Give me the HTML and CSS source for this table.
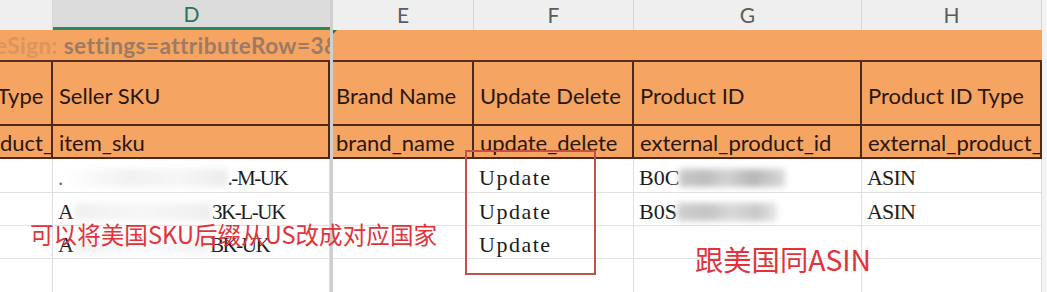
FILE: index.html
```html
<!DOCTYPE html>
<html lang="en">
<head>
<meta charset="utf-8">
<title>Sheet</title>
<link rel="stylesheet" href="styles.css">
</head>
<body>
<div class="sheet">
  <!-- column letters -->
  <div class="ch"></div>
  <div class="ch sel">D</div>
  <div class="freeze"></div>
  <div class="ch">E</div>
  <div class="ch">F</div>
  <div class="ch">G</div>
  <div class="ch">H</div>
  <div class="ch edge"></div>

  <!-- row 1 -->
  <div class="r1 sign"><span class="sign-text"><span class="faint">eSign:</span> settings=attributeRow=3&amp;</span></div>
  <div class="r1 rest"></div>
  <div class="edge r1e"></div>

  <!-- row 2 -->
  <div class="hc r2 cut"><span class="shift">Type</span></div>
  <div class="hc r2">Seller SKU</div>
  <div class="hc r2 e">Brand Name</div>
  <div class="hc r2">Update Delete</div>
  <div class="hc r2">Product ID</div>
  <div class="hc r2">Product ID Type</div>
  <div class="edge"></div>

  <!-- row 3 -->
  <div class="hc r3 cut"><span class="shift">duct_id_type</span></div>
  <div class="hc r3">item_sku</div>
  <div class="hc r3 e">brand_name</div>
  <div class="hc r3">update_delete</div>
  <div class="hc r3">external_product_id</div>
  <div class="hc r3">external_product_id_type</div>
  <div class="edge"></div>

  <!-- data 1 -->
  <div class="dc"></div>
  <div class="dc"><span class="dot">.</span><span class="blur b1"></span><span class="sku">.-M-UK</span></div>
  <div class="dc e"></div>
  <div class="dc"><span class="upd">Update</span></div>
  <div class="dc">B0C<span class="blur g1"></span></div>
  <div class="dc"><span class="asin">ASIN</span></div>
  <div class="edge"></div>

  <!-- data 2 -->
  <div class="dc"></div>
  <div class="dc">A<span class="blur b2"></span><span class="sku">3K-L-UK</span></div>
  <div class="dc e"></div>
  <div class="dc"><span class="upd">Update</span></div>
  <div class="dc">B0S<span class="blur g2"></span></div>
  <div class="dc"><span class="asin">ASIN</span></div>
  <div class="edge"></div>

  <!-- data 3 -->
  <div class="dc"></div>
  <div class="dc">A<span class="blur b3"></span><span class="sku">BK-UK</span></div>
  <div class="dc e"></div>
  <div class="dc"><span class="upd">Update</span></div>
  <div class="dc"></div>
  <div class="dc"></div>
  <div class="edge"></div>

  <!-- data 4 -->
  <div class="dc last"></div>
  <div class="dc last"></div>
  <div class="dc last e"></div>
  <div class="dc last"></div>
  <div class="dc last"></div>
  <div class="dc last"></div>
  <div class="edge"></div>

  <!-- annotations -->
  <div class="mark-box"></div>
  <div class="note note-sku">可以将美国SKU后缀从US改成对应国家</div>
  <div class="note note-asin">跟美国同ASIN</div>
</div>
</body>
</html>
```

FILE: styles.css
```css
html, body {
  margin: 0;
  padding: 0;
  background: #ffffff;
}

.sheet {
  position: relative;
  width: 1047px;
  height: 292px;
  overflow: hidden;
  display: grid;
  grid-template-columns: 53px 277px 3px 141px 160px 228px 180px 5px;
  grid-template-rows: 30px 32px 64px 33px 34px 33px 33px 33px;
  font-family: Lato, "Open Sans", sans-serif;
  color: #2a1710;
}

.sheet > div {
  box-sizing: border-box;
  min-width: 0;
}

/* column letter bar */
.ch {
  background: #efefef;
  border-right: 1px solid #d6d6d6;
  color: #5c5c5c;
  font-size: 21px;
  display: flex;
  align-items: center;
  justify-content: center;
  padding-bottom: 2px;
}
.ch.sel {
  background: #dcdcdc;
  color: #26775a;
  border-bottom: 3px solid #2a8a5e;
  border-right: none;
  padding-bottom: 0;
}
.ch.edge {
  border-right: none;
}

.freeze {
  grid-column: 3;
  grid-row: 1 / -1;
  background: #cfcfcf;
}

.edge {
  background: #f3f3f3;
}

/* row 1 */
.r1 {
  background: #f5a462;
  border-bottom: 2px solid #5a2e1e;
}
.sign {
  grid-column: 1 / 3;
  overflow: hidden;
  white-space: nowrap;
  display: flex;
  align-items: center;
  padding-top: 1px;
}
.sign-text {
  font-weight: 700;
  font-size: 22.6px;
  letter-spacing: 0.4px;
  color: #9c7b66;
  margin-left: -5px;
}
.sign .faint {
  color: #dc955d;
}
.rest {
  grid-column: 4 / 8;
  position: relative;
}
.rest::before {
  content: "";
  position: absolute;
  left: 0;
  top: 0;
  width: 0;
  height: 0;
  border-top: 4px solid #1e7a3a;
  border-right: 4px solid transparent;
}
.r1e {
  border-bottom: none;
}

/* header cells rows 2-3 */
.hc {
  background: #f5a462;
  border-right: 2px solid #4f2818;
  border-bottom: 2px solid #4f2818;
  font-size: 22px;
  display: flex;
  align-items: center;
  padding-left: 6px;
  white-space: nowrap;
  overflow: hidden;
}
.hc.r2 {
  padding-top: 4px;
}
.hc.e {
  padding-left: 3px;
}
.hc.r3 {
  padding-top: 2px;
}
.hc.cut {
  padding-left: 0;
}
.hc.cut .shift {
  margin-left: -3px;
}
.r3.cut .shift {
  margin-left: 0;
}

/* data cells */
.dc {
  border-right: 1px solid #dedede;
  border-bottom: 1px solid #e2e2e2;
  font-family: "Liberation Serif", "DejaVu Serif", serif;
  font-size: 22px;
  line-height: 22px;
  color: #1c1c1c;
  white-space: nowrap;
  display: flex;
  align-items: center;
  padding-left: 5px;
  padding-top: 5px;
}
.dc.e {
  border-right: none;
}
.dc.last {
  border-bottom: none;
}
.upd {
  letter-spacing: 1.5px;
}
.asin {
  letter-spacing: -0.8px;
}
.sku {
  letter-spacing: -1.4px;
  font-size: 21px;
}
.dot {
  color: #555555;
}

.blur {
  display: inline-block;
  height: 18px;
  filter: blur(3px);
}
.b1 {
  width: 164px;
  background: linear-gradient(90deg, #ffffff 0%, #f1f1f1 40%, #f6f6f6 70%, #ececec 100%);
}
.b2 {
  width: 138px;
  background: linear-gradient(90deg, #f0f0f0 0%, #f7f7f7 50%, #eeeeee 100%);
}
.b3 {
  width: 136px;
  background: linear-gradient(90deg, #f3f3f3 0%, #fafafa 60%, #f2f2f2 100%);
}
.g1 {
  width: 106px;
  background: linear-gradient(90deg, #c9c9c9 0%, #bdbdbd 25%, #d2d2d2 45%, #b6b6b6 70%, #dadada 100%);
}
.g2 {
  width: 100px;
  background: linear-gradient(90deg, #cfcfcf 0%, #c4c4c4 30%, #d8d8d8 55%, #c8c8c8 80%, #e6e6e6 100%);
}

/* annotations over the sheet */
.mark-box {
  position: absolute;
  left: 465px;
  top: 150px;
  width: 131px;
  height: 125px;
  border: 2px solid #c4504a;
}
.note {
  position: absolute;
  font-family: "Noto Sans CJK SC", sans-serif;
  color: #e2323b;
  line-height: 1;
  white-space: nowrap;
}
.note-sku {
  left: 30px;
  top: 223px;
  font-size: 23.6px;
}
.note-asin {
  left: 695px;
  top: 245px;
  font-size: 28.3px;
}
```
